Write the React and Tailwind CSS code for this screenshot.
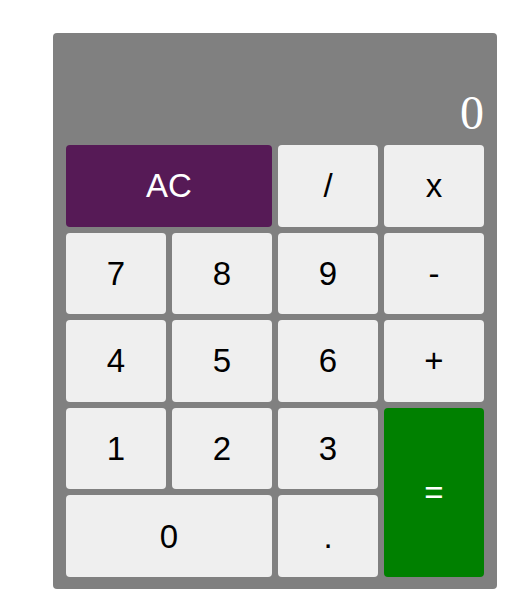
import React from "react";

const btn =
  "flex items-center justify-center rounded-[4px] text-[33px] leading-none";
const light = "bg-[#efefef] text-black";

export default function App() {
  return (
    <div className="min-h-[610px] w-[530px] bg-white pt-[33px] pl-[53px]">
      <div
        className="w-[444px] h-[556px] rounded-[4px] bg-[#808080] px-[13px] pb-[12px] flex flex-col"
        style={{ fontFamily: '"Liberation Sans", Arial, sans-serif' }}
      >
        <div className="h-[112px] flex items-end justify-end pb-[8px]">
          <span
            className="text-white text-[48px] leading-none"
            style={{ fontFamily: '"Liberation Serif", "Times New Roman", serif' }}
          >
            0
          </span>
        </div>
        <div className="grid grid-cols-[repeat(4,100px)] grid-rows-5 gap-[6px] h-[432px]">
          <div className={`${btn} col-span-2 bg-[#561a56] text-white`}>AC</div>
          <div className={`${btn} ${light}`}>/</div>
          <div className={`${btn} ${light}`}>x</div>
          <div className={`${btn} ${light}`}>7</div>
          <div className={`${btn} ${light}`}>8</div>
          <div className={`${btn} ${light}`}>9</div>
          <div className={`${btn} ${light}`}>-</div>
          <div className={`${btn} ${light}`}>4</div>
          <div className={`${btn} ${light}`}>5</div>
          <div className={`${btn} ${light}`}>6</div>
          <div className={`${btn} ${light}`}>+</div>
          <div className={`${btn} ${light}`}>1</div>
          <div className={`${btn} ${light}`}>2</div>
          <div className={`${btn} ${light}`}>3</div>
          <div className={`${btn} row-span-2 bg-[#008000] text-white`}>=</div>
          <div className={`${btn} col-span-2 ${light}`}>0</div>
          <div className={`${btn} ${light}`}>.</div>
        </div>
      </div>
    </div>
  );
}
